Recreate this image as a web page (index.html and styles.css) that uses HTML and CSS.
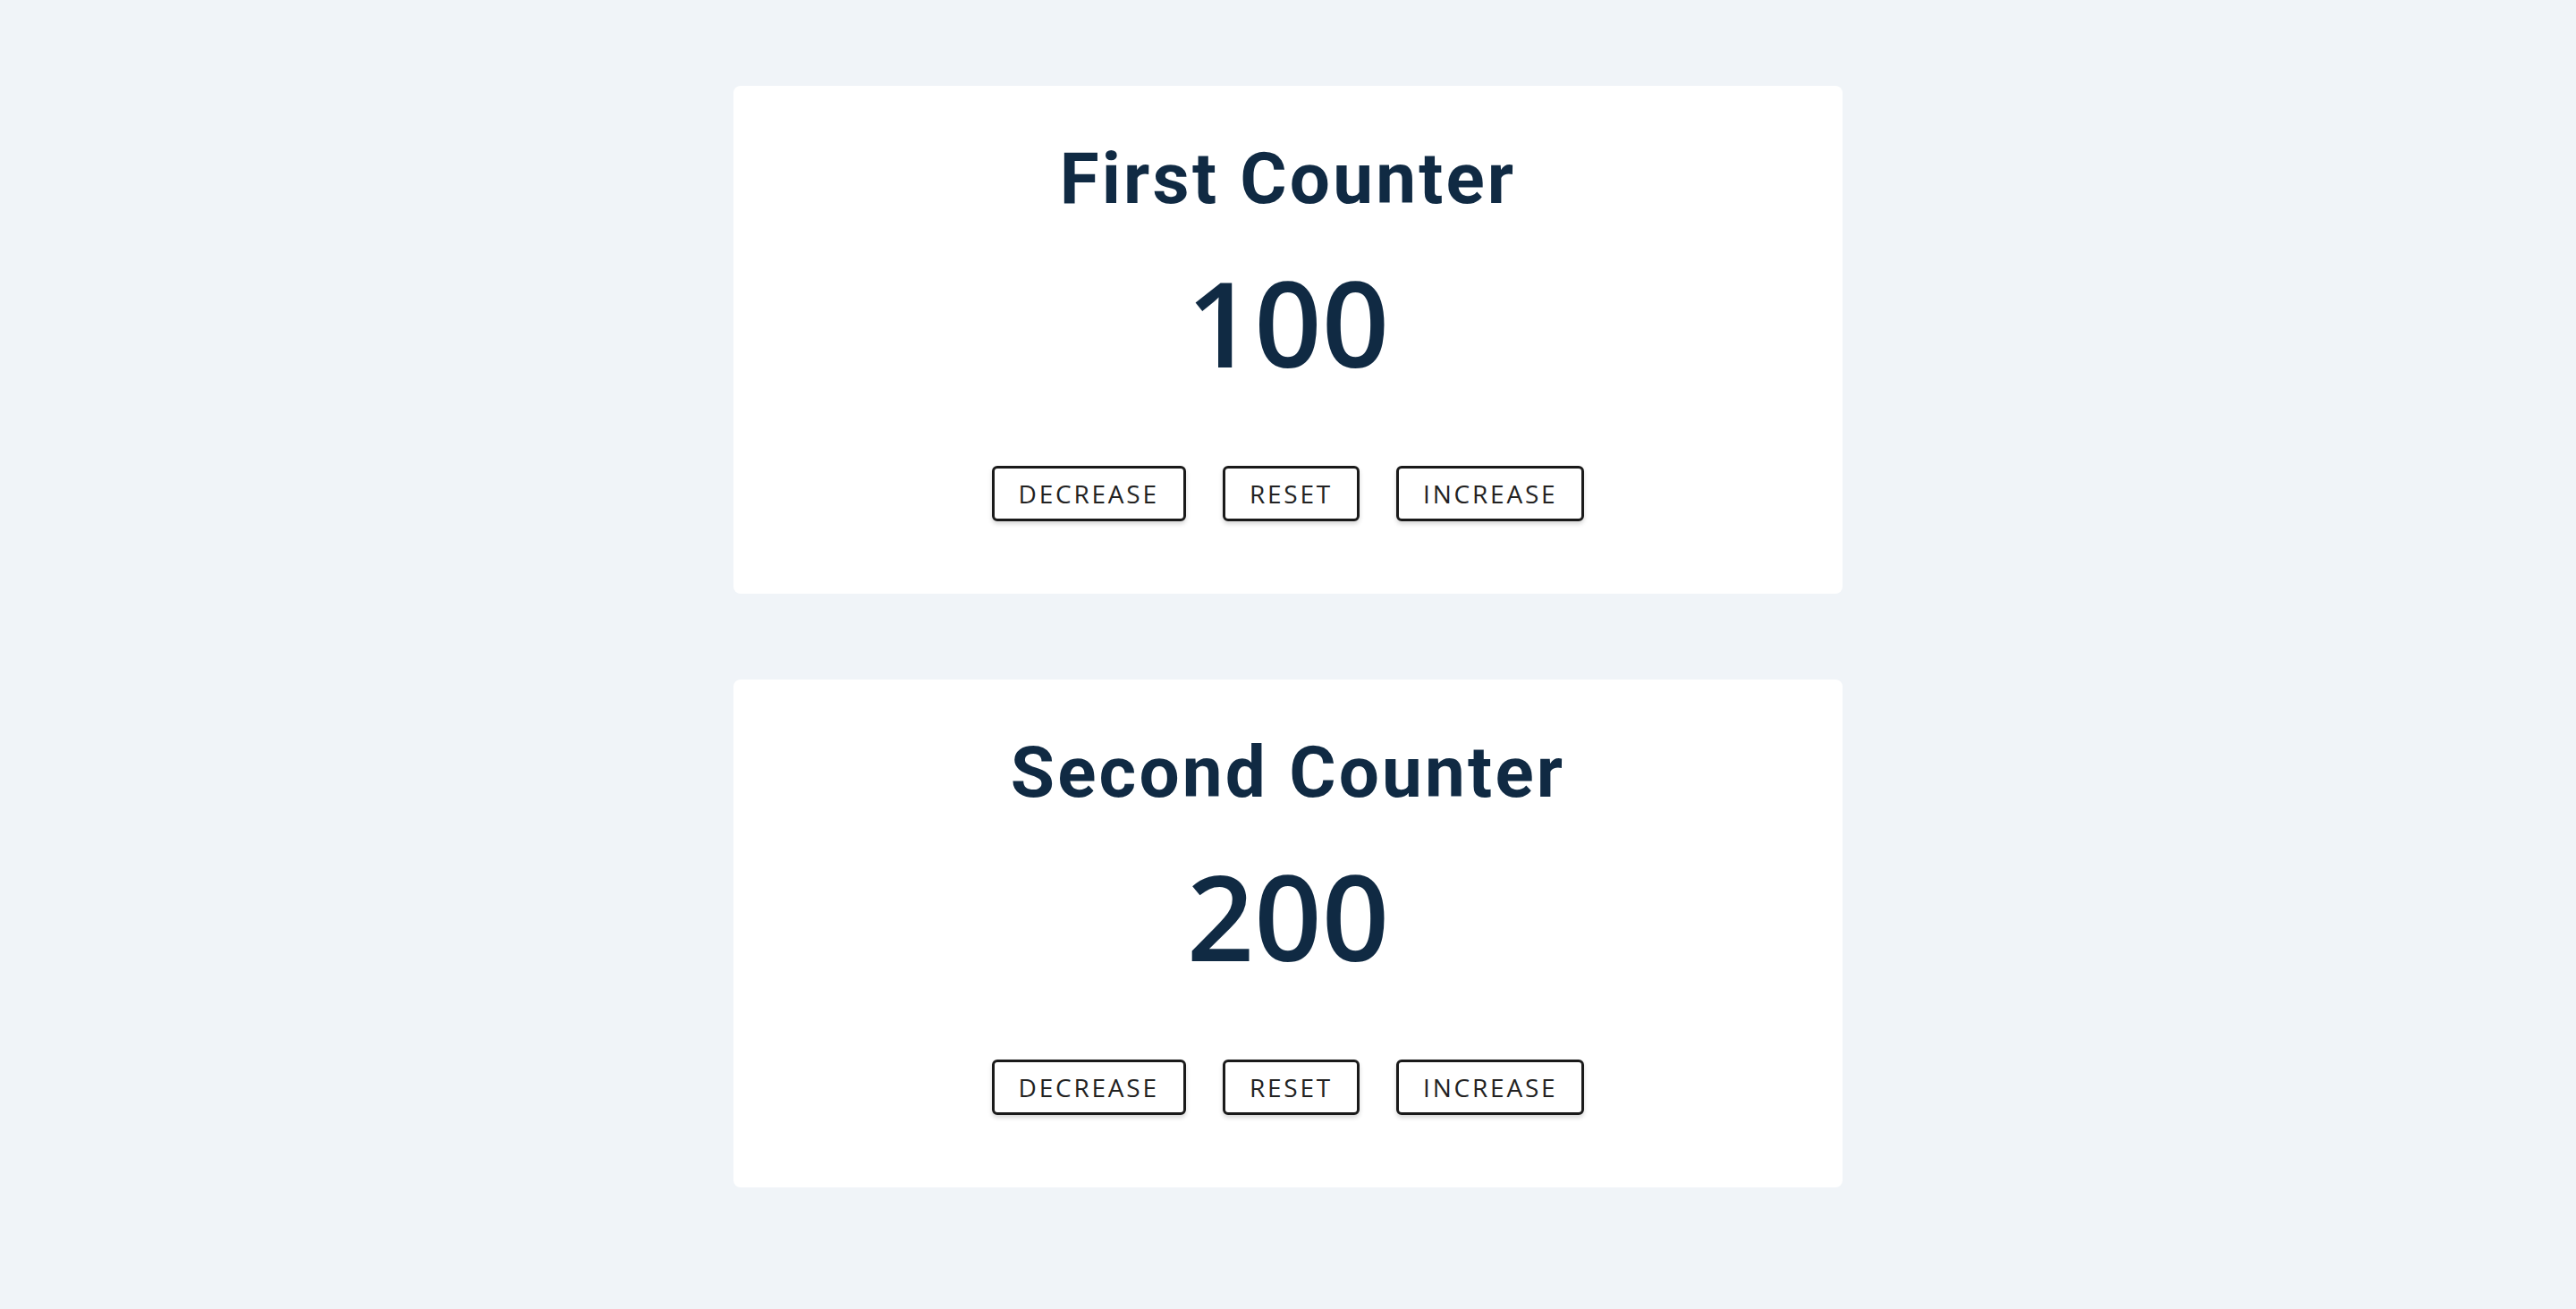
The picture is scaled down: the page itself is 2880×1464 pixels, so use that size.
FILE: index.html
```html
<!DOCTYPE html>
<html lang="en">
<head>
<meta charset="utf-8">
<title>Counters</title>
<link rel="stylesheet" href="styles.css">
</head>
<body>
<main class="page">
  <section class="card">
    <h1 class="card-title">First Counter</h1>
    <div class="count">100</div>
    <div class="actions">
      <button class="btn" type="button">Decrease</button>
      <button class="btn" type="button">Reset</button>
      <button class="btn" type="button">Increase</button>
    </div>
  </section>
  <section class="card">
    <h1 class="card-title">Second Counter</h1>
    <div class="count">200</div>
    <div class="actions">
      <button class="btn" type="button">Decrease</button>
      <button class="btn" type="button">Reset</button>
      <button class="btn" type="button">Increase</button>
    </div>
  </section>
</main>
</body>
</html>
```

FILE: styles.css
```css
html, body {
  margin: 0;
  padding: 0;
}

body {
  background: #f0f4f8;
  color: #102a43;
  font-family: "Open Sans", "Noto Sans", sans-serif;
}

.page {
  display: flex;
  flex-direction: column;
  align-items: center;
  gap: 96px;
  padding-top: 96px;
}

.card {
  width: 1240px;
  box-sizing: border-box;
  background: #ffffff;
  border-radius: 8px;
  padding: 56px 0 81px;
  display: flex;
  flex-direction: column;
  align-items: center;
}

.card-title {
  margin: 0;
  font-family: Roboto, "Liberation Sans", sans-serif;
  font-weight: 700;
  font-size: 80px;
  line-height: 96px;
  letter-spacing: 3.2px;
  color: #102a43;
}

.count {
  margin-top: 46px;
  font-family: "Open Sans", "Noto Sans", sans-serif;
  font-weight: 600;
  font-size: 132px;
  line-height: 132px;
  color: #102a43;
}

.actions {
  margin-top: 95px;
  display: flex;
  gap: 41px;
}

.btn {
  height: 62px;
  box-sizing: border-box;
  display: inline-flex;
  align-items: center;
  justify-content: center;
  padding: 0 27px;
  background: #ffffff;
  border: 3px solid #1a1a1a;
  border-radius: 6px;
  box-shadow: 0 3px 5px rgba(0, 0, 0, 0.16);
  font-family: "Open Sans", "Noto Sans", sans-serif;
  font-size: 28px;
  line-height: 38px;
  letter-spacing: 2.8px;
  text-transform: uppercase;
  color: #222222;
  cursor: pointer;
}
```
